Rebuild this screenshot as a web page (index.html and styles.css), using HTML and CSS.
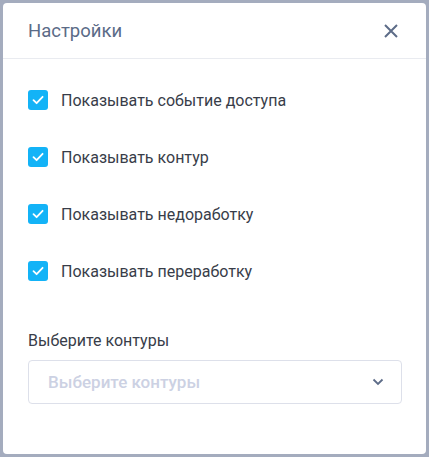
FILE: index.html
```html
<!DOCTYPE html>
<html lang="ru">
<head>
    <meta charset="UTF-8">
    <title>Настройки</title>
    <link rel="stylesheet" href="styles.css">
</head>
<body>
<div class="modal">
    <div class="modal-head">
        <span class="modal-title">Настройки</span>
        <span class="close">
            <svg width="16" height="16" viewBox="0 0 16 16"><path d="M2 2L14 14M14 2L2 14" stroke="#5d6c88" stroke-width="2" fill="none"/></svg>
        </span>
    </div>
    <div class="modal-body">
        <ul class="checks">
            <li><span class="box"><svg width="14" height="14" viewBox="0 0 14 14"><path d="M2.5 7.2L5.6 10.2L11.6 3.8" stroke="#fff" stroke-width="1.8" fill="none" stroke-linecap="round" stroke-linejoin="round"/></svg></span>Показывать событие доступа</li>
            <li><span class="box"><svg width="14" height="14" viewBox="0 0 14 14"><path d="M2.5 7.2L5.6 10.2L11.6 3.8" stroke="#fff" stroke-width="1.8" fill="none" stroke-linecap="round" stroke-linejoin="round"/></svg></span>Показывать контур</li>
            <li><span class="box"><svg width="14" height="14" viewBox="0 0 14 14"><path d="M2.5 7.2L5.6 10.2L11.6 3.8" stroke="#fff" stroke-width="1.8" fill="none" stroke-linecap="round" stroke-linejoin="round"/></svg></span>Показывать недоработку</li>
            <li><span class="box"><svg width="14" height="14" viewBox="0 0 14 14"><path d="M2.5 7.2L5.6 10.2L11.6 3.8" stroke="#fff" stroke-width="1.8" fill="none" stroke-linecap="round" stroke-linejoin="round"/></svg></span>Показывать переработку</li>
        </ul>
        <div class="field">
            <div class="field-label">Выберите контуры</div>
            <div class="select">
                <span class="placeholder">Выберите контуры</span>
                <svg width="12" height="8" viewBox="0 0 12 8"><path d="M1.5 1.5L6 6L10.5 1.5" stroke="#5d6c88" stroke-width="1.8" fill="none"/></svg>
            </div>
        </div>
    </div>
</div>
</body>
</html>
```
FILE: styles.css
```css
* {
    padding: 0;
    margin: 0;
    list-style: none;
    box-sizing: border-box;
}
body {
    background: #a4acbe;
    font-family: Roboto, "Liberation Sans", sans-serif;
    padding: 3px;
}
.modal {
    width: 423px;
    height: 451px;
    background: #fff;
    border-radius: 4px;
}
.modal-head {
    height: 56px;
    display: flex;
    align-items: center;
    justify-content: space-between;
    padding: 0 25px;
    border-bottom: 1px solid #e9ebf0;
}
.modal-title {
    font-size: 18.5px;
    color: #5b6b87;
}
.close {
    display: flex;
    margin-right: 2px;
}
.modal-body {
    padding: 31px 24px 0 25px;
}
.checks {
    display: flex;
    flex-direction: column;
    gap: 37px;
}
.checks li {
    display: flex;
    align-items: center;
    height: 20px;
    font-size: 16px;
    color: #383d49;
}
.box {
    width: 20px;
    height: 20px;
    border-radius: 3px;
    background: #13b3f7;
    display: flex;
    align-items: center;
    justify-content: center;
    margin-right: 13px;
}
.field {
    margin-top: 50px;
}
.field-label {
    font-size: 16px;
    color: #383d49;
    line-height: 20px;
    margin-bottom: 9px;
}
.select {
    height: 44px;
    border: 1px solid #dde0ea;
    border-radius: 4px;
    display: flex;
    align-items: center;
    justify-content: space-between;
    padding: 0 17px 0 19px;
}
.placeholder {
    font-size: 17px;
    font-weight: 500;
    color: #ccd1e3;
}
```
